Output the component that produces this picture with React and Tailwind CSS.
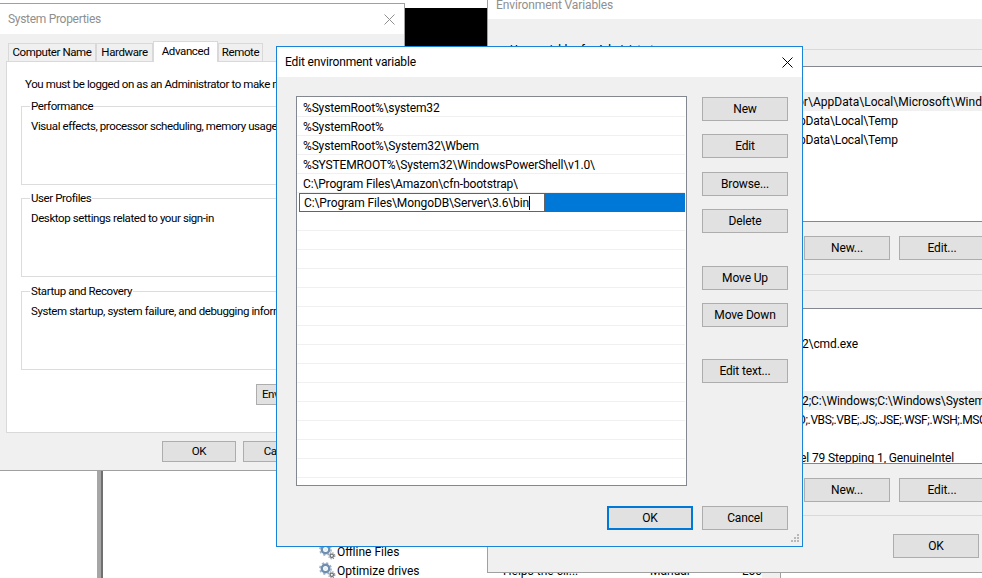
const F = "font-['Roboto',sans-serif]";

function Btn({ children, className = "", primary = false }) {
  return (
    <div className={`flex shrink-0 items-center justify-center whitespace-nowrap bg-[#e1e1e1] ${primary ? "border-2 border-[#0078d7]" : "border border-[#adadad]"} ${className}`}>
      {children}
    </div>
  );
}

function Close({ color = "#000" }) {
  return (
    <svg width="11" height="11" viewBox="0 0 11 11" fill="none" stroke={color} strokeWidth="1">
      <path d="M0.5 0.5 L10.5 10.5 M10.5 0.5 L0.5 10.5" />
    </svg>
  );
}

function Gear() {
  return (
    <svg width="17" height="17" viewBox="0 0 17 17" fill="none" className="shrink-0">
      <circle cx="6.5" cy="6.5" r="5.6" stroke="#9fb3c8" strokeWidth="1.6" strokeDasharray="2.2 2.2" />
      <circle cx="6.5" cy="6.5" r="3.7" stroke="#6f8fb0" strokeWidth="2.4" />
      <circle cx="6.5" cy="6.5" r="1.6" fill="#e8eef4" />
      <circle cx="12.8" cy="12.8" r="3" stroke="#8a8f96" strokeWidth="1.2" strokeDasharray="1.2 1.2" />
      <circle cx="12.8" cy="12.8" r="1.7" stroke="#6f747a" strokeWidth="1.3" />
    </svg>
  );
}

function Group({ label, text, className = "" }) {
  return (
    <div className={`relative h-[79px] border border-[#dcdcdc] pl-[9px] pt-[11px] ${className}`}>
      <span className="absolute left-[8px] top-[-8px] bg-white px-px leading-[15px]">{label}</span>
      <div className="whitespace-nowrap leading-[16px]">{text}</div>
    </div>
  );
}

function Tab({ children, active, className = "" }) {
  return (
    <div className={active
      ? `relative z-10 mb-[-1px] flex h-[21px] items-center justify-center whitespace-nowrap border border-b-0 border-[#d9d9d9] bg-white ${className}`
      : `flex h-[18px] items-center justify-center whitespace-nowrap border border-b-0 border-[#d9d9d9] bg-[#f0f0f0] ${className}`}>
      {children}
    </div>
  );
}

function SystemProperties() {
  return (
    <div className="absolute left-[-2px] top-[3px] flex h-[468px] w-[407px] flex-col border border-[#a0a0a0] bg-[#f0f0f0] text-[11.5px] tracking-[-0.4px]">
      <div className="flex h-[30px] shrink-0 items-center justify-between bg-white pl-[9px] pr-[9px] text-[12px] tracking-[-0.3px] text-[#8f8f8f]">
        <span>System Properties</span>
        <Close color="#8f8f8f" />
      </div>
      <div className="ml-[9px] mt-[7px] flex items-end">
        <Tab className="w-[88px]">Computer Name</Tab>
        <Tab className="w-[57px]">Hardware</Tab>
        <Tab active className="w-[65px]">Advanced</Tab>
        <Tab className="w-[45px]">Remote</Tab>
      </div>
      <div className="mx-[7px] flex h-[372px] flex-col border border-[#d9d9d9] bg-white pl-[14px] pr-[14px]">
        <div className="ml-[4px] mt-[14px] whitespace-nowrap leading-[16px]">You must be logged on as an Administrator to make most of these changes.</div>
        <Group className="mt-[14px]" label="Performance" text="Visual effects, processor scheduling, memory usage, and virtual memory" />
        <Group className="mt-[13px]" label="User Profiles" text="Desktop settings related to your sign-in" />
        <Group className="mt-[14px]" label="Startup and Recovery" text="System startup, system failure, and debugging information" />
        <div className="mt-[14px] flex justify-end">
          <Btn className="h-[21px] w-[126px]">Environment Variables...</Btn>
        </div>
      </div>
      <div className="mt-[8px] flex justify-end gap-[7px] pr-[6px]">
        <Btn className="h-[21px] w-[74px]">OK</Btn>
        <Btn className="h-[21px] w-[74px]">Cancel</Btn>
        <Btn className="h-[21px] w-[74px]">Apply</Btn>
      </div>
    </div>
  );
}

function EnvList({ rows }) {
  return (
    <div className="h-[156px] overflow-hidden border border-[#828790] bg-white">
      <div className="h-[25px]" />
      {rows.map((r, i) => (
        <div key={i} className={`h-[19px] whitespace-nowrap leading-[20px] ${r.sel ? "bg-[#f0f0f0]" : ""} ${r.c || ""}`} style={{ paddingLeft: r.pl }}>
          {r.t}
        </div>
      ))}
    </div>
  );
}

function EnvironmentVariables() {
  const user = [
    { pl: 283, t: "or\\AppData\\Local\\Microsoft\\WindowsApps", sel: true, c: "tracking-[0.02px]" },
    { pl: 285, t: "pData\\Local\\Temp" },
    { pl: 285, t: "pData\\Local\\Temp" },
  ];
  const sys = [
    { pl: 288, t: "2\\cmd.exe" },
    { pl: 0, t: "" },
    { pl: 0, t: "" },
    { pl: 288, t: "2;C:\\Windows;C:\\Windows\\System32\\Wbem", sel: true, c: "tracking-[-0.1px]" },
    { pl: 284, t: "D;.VBS;.VBE;.JS;.JSE;.WSF;.WSH;.MSC", c: "tracking-[-0.4px]" },
    { pl: 0, t: "" },
    { pl: 286, t: "el 79 Stepping 1, GenuineIntel" },
  ];
  return (
    <div className="absolute left-[487px] top-[-11px] flex h-[584px] w-[620px] flex-col border border-[#a0a0a0] bg-[#f0f0f0] tracking-[-0.12px]">
      <div className="flex h-[29px] shrink-0 items-center bg-white pl-[8px] text-[#8f8f8f]">Environment Variables</div>
      <div className="relative mx-[12px] mt-[30px] h-[226px] border border-[#d9d9d9] pl-[12px] pr-[13px] pt-[16px]">
        <span className="absolute left-[8px] top-[-8px] bg-[#f0f0f0] px-px leading-[16px] tracking-[-0.5px]">User variables for Administrator</span>
        <EnvList rows={user} />
        <div className="mt-[14px] flex justify-end gap-[9px]">
          <Btn className="h-[24px] w-[86px]">New...</Btn>
          <Btn className="h-[24px] w-[86px]">Edit...</Btn>
          <Btn className="h-[24px] w-[86px]">Delete</Btn>
        </div>
      </div>
      <div className="mx-[12px] mt-[15px] h-[226px] border border-[#d9d9d9] pl-[12px] pr-[13px] pt-[17px]">
        <EnvList rows={sys} />
        <div className="mt-[14px] flex justify-end gap-[9px]">
          <Btn className="h-[24px] w-[86px]">New...</Btn>
          <Btn className="h-[24px] w-[86px]">Edit...</Btn>
          <Btn className="h-[24px] w-[86px]">Delete</Btn>
        </div>
      </div>
      <div className="mt-[18px] flex justify-end gap-[9px] pr-[32px]">
        <Btn className="h-[24px] w-[86px]">OK</Btn>
        <Btn className="h-[24px] w-[86px]">Cancel</Btn>
      </div>
    </div>
  );
}

function EditDialog() {
  const paths = [
    "%SystemRoot%\\system32",
    "%SystemRoot%",
    "%SystemRoot%\\System32\\Wbem",
    "%SYSTEMROOT%\\System32\\WindowsPowerShell\\v1.0\\",
    "C:\\Program Files\\Amazon\\cfn-bootstrap\\",
  ];
  const blanks = Array.from({ length: 14 });
  return (
    <div className="absolute left-[276px] top-[46px] flex h-[501px] w-[527px] flex-col border border-[#1883d7] bg-[#f0f0f0] tracking-[-0.15px]">
      <div className="flex h-[30px] shrink-0 items-center justify-between bg-white pl-[8px] pr-[4px]">
        <span>Edit environment variable</span>
        <span className="mr-[5px]"><Close /></span>
      </div>
      <div className="ml-[19px] mt-[19px] flex items-start">
        <div className="h-[390px] w-[391px] border border-[#828790] bg-white pr-px pt-px">
          {paths.map((p) => (
            <div key={p} className="h-[19px] whitespace-nowrap border-b border-[#f0f0f0] pl-[6px] leading-[20px]">{p}</div>
          ))}
          <div className="ml-[2px] h-[19px] bg-[#0078d7]">
            <div className="h-[19px] w-[246px] whitespace-nowrap border border-[#646464] bg-white pl-[4px] leading-[18px] tracking-[-0.1px]">
              <span className="border-r border-black">C:\Program Files\MongoDB\Server\3.6\bin</span>
            </div>
          </div>
          {blanks.map((_, i) => (
            <div key={i} className="h-[19px] border-b border-[#f0f0f0]" />
          ))}
        </div>
        <div className="ml-[15px] mt-px flex flex-col">
          <Btn className="h-[24px] w-[86px]">New</Btn>
          <Btn className="mt-[13px] h-[24px] w-[86px]">Edit</Btn>
          <Btn className="mt-[14px] h-[24px] w-[86px]">Browse...</Btn>
          <Btn className="mt-[13px] h-[24px] w-[86px]">Delete</Btn>
          <Btn className="mt-[33px] h-[24px] w-[86px]">Move Up</Btn>
          <Btn className="mt-[13px] h-[24px] w-[86px]">Move Down</Btn>
          <Btn className="mt-[32px] h-[24px] w-[86px]">Edit text...</Btn>
        </div>
      </div>
      <div className="mt-[20px] flex justify-end gap-[9px] pr-[14px]">
        <Btn primary className="h-[24px] w-[86px]">OK</Btn>
        <Btn className="h-[24px] w-[86px]">Cancel</Btn>
      </div>
      <svg className="absolute bottom-[2px] right-[2px]" width="10" height="10" viewBox="0 0 10 10" fill="#b8b8b8">
        <rect x="7" y="0" width="2" height="2" />
        <rect x="4" y="3" width="2" height="2" />
        <rect x="7" y="3" width="2" height="2" />
        <rect x="1" y="6" width="2" height="2" />
        <rect x="4" y="6" width="2" height="2" />
        <rect x="7" y="6" width="2" height="2" />
      </svg>
    </div>
  );
}

function Services() {
  return (
    <>
      <div className="absolute left-[97px] top-[470px] flex h-[108px]">
        <div className="w-[4px] bg-[#a6a6a6]" />
        <div className="w-[2px] bg-[#707070]" />
      </div>
      <div className="absolute left-[319px] top-[542px] w-[444px]">
        <div className="flex h-[19px] items-center">
          <Gear />
          <span className="ml-px">Offline Files</span>
        </div>
        <div className="flex h-[19px] items-center whitespace-nowrap">
          <Gear />
          <span className="ml-px w-[166px]">Optimize drives</span>
          <span className="w-[147px]">Helps the cli...</span>
          <span className="w-[92px]">Manual</span>
          <span>Loc</span>
        </div>
      </div>
      <div className="absolute left-[762px] top-[560px] h-[18px] w-[19px] border-r border-[#a0a0a0] bg-[#f0f0f0]" />
    </>
  );
}

export default function App() {
  return (
    <div className={`relative h-[578px] w-[982px] overflow-hidden bg-white text-[12px] text-[#000] ${F}`}>
      <Services />
      <div className="absolute left-[404px] top-[8px] h-[60px] w-[84px] bg-black" />
      <EnvironmentVariables />
      <SystemProperties />
      <EditDialog />
    </div>
  );
}
